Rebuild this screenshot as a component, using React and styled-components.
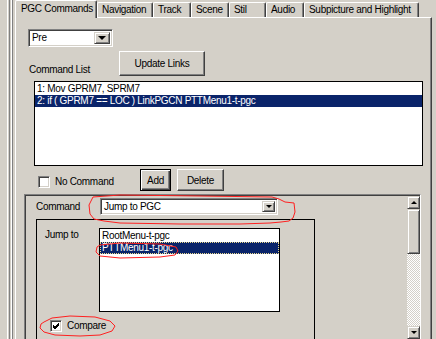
import React from "react";
import styled, { createGlobalStyle, css } from "styled-components";

const Global = createGlobalStyle`
  html, body { margin: 0; padding: 0; background: #d4d0c8; }
  body { font-family: "Liberation Sans", Arial, sans-serif; font-size: 10px; color: #000; }
  * { box-sizing: border-box; }
`;

const Root = styled.div`
  position: relative;
  width: 436px;
  height: 339px;
  overflow: hidden;
  display: flex;
  background: #d4d0c8;
  letter-spacing: -0.3px;
`;

const Rail = styled.div`
  width: 6px;
  margin-left: 7px;
  margin-right: 2px;
  background: linear-gradient(
    to right,
    #ffffff 0 1px,
    #d4d0c8 1px 2px,
    #808080 2px 3px,
    #d4d0c8 3px 4px,
    #ffffff 4px 5px,
    #808080 5px 6px
  );
`;

const TabControl = styled.div`
  width: 417px;
  display: flex;
  flex-direction: column;
`;

const TabStrip = styled.div`
  height: 19px;
  display: flex;
  align-items: flex-end;
  position: relative;
  z-index: 2;
`;

const Tab = styled.div`
  width: ${(p) => p.$w}px;
  height: 15px;
  padding-left: 4px;
  line-height: 14px;
  white-space: nowrap;
  overflow: hidden;
  background: #d4d0c8;
  border-top: 1px solid #fff;
  border-left: 1px solid #fff;
  border-right: 1px solid #404040;
  box-shadow: inset -1px 0 #808080;
  border-radius: 2px 2px 0 0;
  ${(p) =>
    p.$active &&
    css`
      height: 18px;
      margin-bottom: -1px;
      padding-left: 5px;
      line-height: 15px;
      padding-bottom: 2px;
    `}
`;

const Panel = styled.div`
  flex: 1;
  display: flex;
  flex-direction: column;
  border-top: 1px solid #fff;
  border-left: 1px solid #fff;
  border-right: 1px solid #404040;
  box-shadow: inset -1px 0 #808080;
`;

const ComboBox = styled.div`
  width: ${(p) => p.$w}px;
  height: ${(p) => p.$h}px;
  margin-left: ${(p) => p.$ml || 0}px;
  margin-top: ${(p) => p.$mt || 0}px;
  display: flex;
  background: #fff;
  border-top: 1px solid #808080;
  border-left: 1px solid #808080;
  border-right: 1px solid #fff;
  border-bottom: 1px solid #fff;
  box-shadow: inset 1px 1px #404040, inset -1px -1px #d4d0c8;
  padding: 2px;
`;

const ComboText = styled.div`
  flex: 1;
  padding-left: 1px;
  line-height: ${(p) => p.$lh}px;
  white-space: nowrap;
  overflow: hidden;
`;

const ComboButton = styled.div`
  width: ${(p) => p.$w}px;
  display: flex;
  align-items: center;
  justify-content: center;
  background: #d4d0c8;
  border-top: 1px solid #d4d0c8;
  border-left: 1px solid #d4d0c8;
  border-right: 1px solid #404040;
  border-bottom: 1px solid #404040;
  box-shadow: inset 1px 1px #fff, inset -1px -1px #808080;
`;

const Arrow = styled.div`
  width: 0;
  height: 0;
  border-left: ${(p) => p.$s}px solid transparent;
  border-right: ${(p) => p.$s}px solid transparent;
  ${(p) =>
    p.$up
      ? css`border-bottom: ${p.$s}px solid #000;`
      : css`border-top: ${p.$s}px solid #000;`}
`;

const LabelRow = styled.div`
  display: flex;
  align-items: flex-end;
  margin-top: 4px;
  height: 25px;
`;

const Label = styled.div`
  width: ${(p) => p.$w}px;
  margin-left: ${(p) => p.$ml || 0}px;
  margin-top: ${(p) => p.$mt || 0}px;
  line-height: 12px;
  white-space: nowrap;
  flex-shrink: 0;
`;

const Button = styled.div`
  width: ${(p) => p.$w}px;
  height: ${(p) => p.$h}px;
  margin-left: ${(p) => p.$ml || 0}px;
  display: flex;
  align-items: center;
  justify-content: center;
  background: #d4d0c8;
  border-top: 1px solid #fff;
  border-left: 1px solid #fff;
  border-right: 1px solid #404040;
  border-bottom: 1px solid #404040;
  box-shadow: inset -1px -1px #808080;
  white-space: nowrap;
  ${(p) =>
    p.$default &&
    css`
      border: 1px solid #000;
      box-shadow: inset 1px 1px #fff, inset -1px -1px #404040, inset -2px -2px #808080;
    `}
`;

const ListBox = styled.div`
  width: ${(p) => p.$w}px;
  height: ${(p) => p.$h}px;
  margin-left: ${(p) => p.$ml || 0}px;
  margin-top: ${(p) => p.$mt || 0}px;
  background: #fff;
  border: 1px solid #000;
  padding-top: 1px;
  flex-shrink: 0;
  overflow: hidden;
`;

const ListItem = styled.div`
  height: 12px;
  line-height: 12px;
  padding-left: 2px;
  white-space: nowrap;
  ${(p) =>
    p.$selected &&
    css`
      background: #0a246a;
      color: #fff;
    `}
  ${(p) =>
    p.$focus &&
    css`
      outline: 1px dotted #e9d88f;
      outline-offset: -1px;
    `}
`;

const ActionRow = styled.div`
  display: flex;
  align-items: center;
  height: 22px;
  margin-top: 3px;
`;

const CheckWrap = styled.div`
  display: flex;
  align-items: center;
  margin-left: ${(p) => p.$ml}px;
  margin-top: ${(p) => p.$mt || 0}px;
`;

const CheckBox = styled.div`
  width: 12px;
  height: 12px;
  background: #fff;
  border-top: 1px solid #808080;
  border-left: 1px solid #808080;
  border-right: 1px solid #fff;
  border-bottom: 1px solid #fff;
  box-shadow: inset 1px 1px #404040, inset -1px -1px #d4d0c8;
  display: flex;
  align-items: center;
  justify-content: center;
`;

const CheckLabel = styled.div`
  margin-left: 5px;
  line-height: 12px;
  width: ${(p) => p.$w}px;
  white-space: nowrap;
  font-size: ${(p) => p.$fs || 10}px;
`;

const LowerPanel = styled.div`
  flex: 1;
  width: 397px;
  margin-left: 8px;
  margin-top: 3px;
  display: flex;
  border-top: 1px solid #808080;
  border-left: 1px solid #808080;
  border-right: 1px solid #fff;
  box-shadow: inset 1px 1px #404040;
  padding: 1px 0 0 1px;
`;

const LowerContent = styled.div`
  flex: 1;
  display: flex;
  flex-direction: column;
`;

const CommandRow = styled.div`
  display: flex;
  align-items: center;
  margin-top: 2px;
`;

const GroupBox = styled.div`
  width: 279px;
  height: 150px;
  margin-left: 10px;
  margin-top: 4px;
  border: 1px solid #000;
  display: flex;
  flex-direction: column;
`;

const JumpRow = styled.div`
  display: flex;
  align-items: flex-start;
`;

const ScrollBar = styled.div`
  width: 13px;
  display: flex;
  flex-direction: column;
`;

const ScrollBtn = styled.div`
  height: 13px;
  flex-shrink: 0;
  display: flex;
  align-items: center;
  justify-content: center;
  background: #d4d0c8;
  border-top: 1px solid #d4d0c8;
  border-left: 1px solid #d4d0c8;
  border-right: 1px solid #404040;
  border-bottom: 1px solid #404040;
  box-shadow: inset 1px 1px #fff, inset -1px -1px #808080;
`;

const Thumb = styled(ScrollBtn)`
  height: 45px;
`;

const Track = styled.div`
  height: 72px;
  flex-shrink: 0;
  background-color: #fff;
  background-image: conic-gradient(#d4d0c8 25%, #fff 0 50%, #d4d0c8 0 75%, #fff 0);
  background-size: 2px 2px;
`;

const Marks = styled.svg`
  position: absolute;
  left: 0;
  top: 0;
  width: 436px;
  height: 339px;
  pointer-events: none;
`;

const tabs = [
  ["PGC Commands", 82, true],
  ["Navigation", 56],
  ["Track", 38],
  ["Scene", 38],
  ["Stil", 37],
  ["Audio", 38],
  ["Subpicture and Highlight", 115],
];

export default function App() {
  return (
    <>
      <Global />
      <Root>
        <Rail />
        <TabControl>
          <TabStrip>
            {tabs.map(([t, w, a]) => (
              <Tab key={t} $w={w} $active={a}>
                {t}
              </Tab>
            ))}
          </TabStrip>
          <Panel>
            <ComboBox $w={85} $h={18} $ml={12} $mt={11}>
              <ComboText $lh={12}>Pre</ComboText>
              <ComboButton $w={16}>
                <Arrow $s={4} />
              </ComboButton>
            </ComboBox>

            <LabelRow>
              <Label $w={90} $ml={13}>Command List</Label>
              <Button $w={86} $h={25}>Update Links</Button>
            </LabelRow>

            <ListBox $w={389} $h={85} $ml={18} $mt={5}>
              <ListItem>1: Mov GPRM7, SPRM7</ListItem>
              <ListItem $selected>2: if ( GPRM7 == LOC ) LinkPGCN PTTMenu1-t-pgc</ListItem>
            </ListBox>

            <ActionRow>
              <CheckWrap $ml={22} $mt={4}>
                <CheckBox />
                <CheckLabel $w={85}>No Command</CheckLabel>
              </CheckWrap>
              <Button $w={31} $h={22} $default>Add</Button>
              <Button $w={47} $h={22} $ml={6}>Delete</Button>
            </ActionRow>

            <LowerPanel>
              <LowerContent>
                <CommandRow>
                  <Label $w={64} $ml={10}>Command</Label>
                  <ComboBox $w={178} $h={17}>
                    <ComboText $lh={11}>Jump to PGC</ComboText>
                    <ComboButton $w={13}>
                      <Arrow $s={3} />
                    </ComboButton>
                  </ComboBox>
                </CommandRow>
                <GroupBox>
                  <JumpRow>
                    <Label $w={54} $ml={8} $mt={9}>Jump to</Label>
                    <ListBox $w={181} $h={84} $mt={8}>
                      <ListItem>RootMenu-t-pgc</ListItem>
                      <ListItem $selected $focus>PTTMenu1-t-pgc</ListItem>
                    </ListBox>
                  </JumpRow>
                  <CheckWrap $ml={13} $mt={8}>
                    <CheckBox>
                      <svg width="8" height="8" viewBox="0 0 8 8">
                        <path d="M1 3 L3 5 L7 1 M1 4 L3 6 L7 2 M1 5 L3 7 L7 3" stroke="#000" strokeWidth="1" fill="none" />
                      </svg>
                    </CheckBox>
                    <CheckLabel $w={60}>Compare</CheckLabel>
                  </CheckWrap>
                </GroupBox>
              </LowerContent>
              <ScrollBar>
                <ScrollBtn>
                  <Arrow $s={3} $up />
                </ScrollBtn>
                <Thumb />
                <Track />
                <ScrollBtn>
                  <Arrow $s={3} />
                </ScrollBtn>
              </ScrollBar>
            </LowerPanel>
          </Panel>
        </TabControl>
        <Marks viewBox="0 0 436 339">
          <g fill="none" stroke="#ff2020" strokeWidth="1">
            <path d="M93 197 L120 195 L200 196 L272 197 L279 199 L285 202 L294 203 L295 212 L293 218 L289 221 L281 222 L270 223 L240 224 L180 224 L120 223 L104 221 L94 219 L90 214 L89 205 L92 199 Z" />
            <path d="M100 245 L120 243 L160 244 L176 247 L178 251 L175 255 L160 257 L120 258 L100 256 L96 252 L97 247 Z" />
            <path d="M44 322 L52 318 L70 316 L95 317 L110 321 L115 326 L112 331 L100 335 L80 336 L55 335 L44 332 L40 328 L41 324 Z" />
          </g>
        </Marks>
      </Root>
    </>
  );
}
